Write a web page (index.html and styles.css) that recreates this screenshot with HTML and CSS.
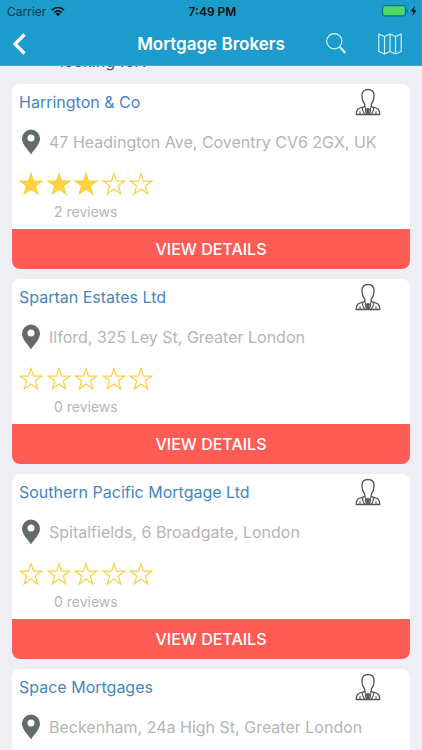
FILE: index.html
```html
<!DOCTYPE html>
<html lang="en">
<head>
<meta charset="utf-8">
<meta name="viewport" content="width=device-width, initial-scale=1">
<title>Mortgage Brokers</title>
<link rel="stylesheet" href="styles.css">
</head>
<body>
<svg class="defs" aria-hidden="true">
  <symbol id="agent" viewBox="0 0 26 28">
    <g fill="none" stroke="#555" stroke-linejoin="round" stroke-linecap="round">
      <path stroke-width="1.300" d="M9.700 18.500V16C8 14 6.900 11.500 6.900 8C6.900 3.400 9.300 1.500 13 1.500S19.100 3.400 19.100 8C19.100 11.500 18 14 16.300 16V18.500"/>
      <path stroke-width="1.300" d="M9.700 18.500C7 19.500 4.300 19.700 2.800 21.200C1.500 22.500 1.200 24.500 1.200 26.500H24.800C24.800 24.500 24.500 22.500 23.200 21.200C21.700 19.700 19 19.500 16.300 18.500"/>
      <path stroke-width="1.100" d="M8 19.300C6.700 21.500 8 24 10 26.400M18 19.300C19.300 21.500 18 24 16 26.400M9.700 18.500L11.200 22L13 20.300L14.800 22L16.300 18.500M5 23.500V26.400M21 23.500V26.400M10.300 22L11.500 26M15.700 22L14.500 26"/>
      <path fill="#555" stroke-width=".6" d="M12.200 21H13.800L14.300 25L13 26.400L11.700 25Z"/>
    </g>
  </symbol>
  <symbol id="pin" viewBox="0 0 18 26">
    <path fill="#636a6c" fill-rule="evenodd" d="M9 .5A9 9 0 0 0 0 9.500C0 15.500 6 20.500 9 25.500C12 20.500 18 15.500 18 9.500A9 9 0 0 0 9 .5ZM9 5.500A3.500 3.500 0 1 1 9 12.500A3.500 3.500 0 1 1 9 5.500Z"/>
  </symbol>
  <symbol id="star" viewBox="0 0 24 24">
    <path stroke="#fbcf45" stroke-width="1.200" d="M12 1.500L14.500 9.100H22.900L16.300 13.900L18.800 22L12 17.100L5.200 22L7.700 13.900L1.100 9.100H9.500Z"/>
  </symbol>
</svg>

<header class="top">
  <div class="status">
    <span class="carrier">Carrier
      <svg width="14" height="11" viewBox="0 0 14 11" fill="none" stroke="#111" stroke-width="1.700"><path d="M1 4.200C4.500.6 9.500.6 13 4.200M3.300 6.500C5.500 4.300 8.500 4.300 10.700 6.500"/><path fill="#111" stroke="none" d="M4.700 7.800C6 6.500 8 6.500 9.300 7.800L7 10.300Z"/></svg>
    </span>
    <span class="clock">7:49 PM</span>
    <span class="power">
      <svg width="36" height="12" viewBox="0 0 36 12"><rect x=".5" y=".5" width="23" height="10.500" rx="2" fill="#1c9ccc" stroke="#176f83"/><rect x="1.500" y="1.500" width="21" height="8.500" rx="1" fill="#4cd964"/><path fill="#176f83" d="M24.500 4C26.500 4 26.500 8 24.500 8Z"/><path fill="#111" d="M33 .8L28.700 6.500H31.300L30.300 11L34.600 5.200H32Z"/></svg>
    </span>
  </div>
  <nav class="bar">
    <button class="icon" type="button" aria-label="Back">
      <svg width="14" height="22" viewBox="0 0 14 22" fill="none" stroke="#fff" stroke-width="3.200"><path d="M12.500 1.500L3 11L12.500 20.500"/></svg>
    </button>
    <h1>Mortgage Brokers</h1>
    <div class="actions">
      <button class="icon" type="button" aria-label="Search">
        <svg width="20" height="21" viewBox="0 0 20 21" fill="none" stroke="#d9f5fc"><circle cx="8.300" cy="8.300" r="7.600" stroke-width="1.200"/><path stroke-width="1.200" d="M13.500 13.800L15 15.300"/><path stroke-width="2.200" stroke-linecap="round" d="M15 15.300L18.700 19.200"/></svg>
      </button>
      <button class="icon" type="button" aria-label="Map">
        <svg width="24" height="22" viewBox="0 0 24 22" fill="none" stroke="#c9f1fa" stroke-width="1.200" stroke-linejoin="round"><path d="M.8 1L6.500 3.500L12 1L17.500 3.500L23.200 1V18.500L17.500 21L12 18.500L6.500 21L.8 18.500ZM6.500 3.500V21M12 1V18.500M17.500 3.500V21"/></svg>
      </button>
    </div>
  </nav>
</header>

<main class="list">
  <p class="prompt">looking for?</p>

  <article class="card">
    <div class="head"><h2>Harrington &amp; Co</h2><svg class="agent"><use href="#agent"/></svg></div>
    <p class="address"><svg class="pin"><use href="#pin"/></svg>47 Headington Ave, Coventry CV6 2GX, UK</p>
    <div class="stars" role="img" aria-label="3 of 5 stars"><svg class="on"><use href="#star"/></svg><svg class="on"><use href="#star"/></svg><svg class="on"><use href="#star"/></svg><svg><use href="#star"/></svg><svg><use href="#star"/></svg></div>
    <p class="reviews">2 reviews</p>
    <button class="details" type="button">VIEW DETAILS</button>
  </article>

  <article class="card">
    <div class="head"><h2>Spartan Estates Ltd</h2><svg class="agent"><use href="#agent"/></svg></div>
    <p class="address"><svg class="pin"><use href="#pin"/></svg>Ilford, 325 Ley St, Greater London</p>
    <div class="stars" role="img" aria-label="0 of 5 stars"><svg><use href="#star"/></svg><svg><use href="#star"/></svg><svg><use href="#star"/></svg><svg><use href="#star"/></svg><svg><use href="#star"/></svg></div>
    <p class="reviews">0 reviews</p>
    <button class="details" type="button">VIEW DETAILS</button>
  </article>

  <article class="card">
    <div class="head"><h2>Southern Pacific Mortgage Ltd</h2><svg class="agent"><use href="#agent"/></svg></div>
    <p class="address"><svg class="pin"><use href="#pin"/></svg>Spitalfields, 6 Broadgate, London</p>
    <div class="stars" role="img" aria-label="0 of 5 stars"><svg><use href="#star"/></svg><svg><use href="#star"/></svg><svg><use href="#star"/></svg><svg><use href="#star"/></svg><svg><use href="#star"/></svg></div>
    <p class="reviews">0 reviews</p>
    <button class="details" type="button">VIEW DETAILS</button>
  </article>

  <article class="card">
    <div class="head"><h2>Space Mortgages</h2><svg class="agent"><use href="#agent"/></svg></div>
    <p class="address"><svg class="pin"><use href="#pin"/></svg>Beckenham, 24a High St, Greater London</p>
    <div class="stars" role="img" aria-label="0 of 5 stars"><svg><use href="#star"/></svg><svg><use href="#star"/></svg><svg><use href="#star"/></svg><svg><use href="#star"/></svg><svg><use href="#star"/></svg></div>
  </article>
</main>
</body>
</html>
```
FILE: styles.css
```css
* { box-sizing: border-box; }

body {
  margin: 0;
  height: 100vh;
  display: flex;
  flex-direction: column;
  overflow: hidden;
  background: #efeef5;
  font-family: Inter, "Liberation Sans", sans-serif;
  font-size: 16px;
}

h1, h2, p { margin: 0; font-weight: 400; }
svg { display: block; flex: none; }
.defs { position: absolute; width: 0; height: 0; }

.top {
  flex: none;
  background: #1c9ccc;
  border-bottom: 1px solid #4fa9cc;
}

.status {
  display: grid;
  grid-template-columns: 1fr auto 1fr;
  align-items: center;
  height: 22px;
  padding: 0 4px 0 7px;
  font-size: 12px;
  color: #111;
}
.carrier { display: flex; align-items: center; gap: 5px; color: #12394a; }
.clock { font-weight: 600; }
.power { justify-self: end; }

.bar {
  display: grid;
  grid-template-columns: 1fr auto 1fr;
  align-items: center;
  height: 43px;
  padding: 0 20px 0 12px;
}
.bar h1 { padding-left: 8px; font-size: 17px; font-weight: 600; line-height: 20px; color: #fff; }
.actions { display: flex; justify-content: flex-end; gap: 32px; }

.icon {
  display: flex;
  align-items: center;
  justify-self: start;
  padding: 0;
  border: 0;
  background: none;
}

.list {
  flex: 1;
  min-height: 0;
  overflow: hidden;
  padding: 0 12px;
}

.prompt {
  margin: -15px 0 13px;
  padding-left: 48px;
  line-height: 20px;
  color: #555;
}

.card {
  margin-bottom: 10px;
  border-radius: 8px;
  overflow: hidden;
  background: #fff;
}

.head {
  display: flex;
  align-items: center;
  justify-content: space-between;
  height: 36px;
  padding: 0 29px 0 7px;
}
.head h2 { font-size: 16px; color: #4586c2; }
.agent { width: 26px; height: 28px; }

.address {
  display: flex;
  align-items: center;
  gap: 9px;
  height: 44px;
  padding-left: 10px;
  color: #b5b5b5;
}
.pin { width: 18px; height: 26px; }

.stars {
  display: flex;
  justify-content: space-between;
  align-items: center;
  width: 134px;
  height: 40px;
  margin-left: 7px;
}
.stars svg { width: 24px; height: 24px; fill: #fff; }
.stars .on { fill: #ffd23f; }

.reviews {
  height: 25px;
  padding-left: 42px;
  font-size: 14px;
  line-height: 16px;
  color: #b5b5b5;
}

.details {
  display: block;
  width: 100%;
  height: 40px;
  padding: 0;
  border: 0;
  background: #ff5c56;
  color: #fff;
  font: 500 16px Inter, "Liberation Sans", sans-serif;
}
```
